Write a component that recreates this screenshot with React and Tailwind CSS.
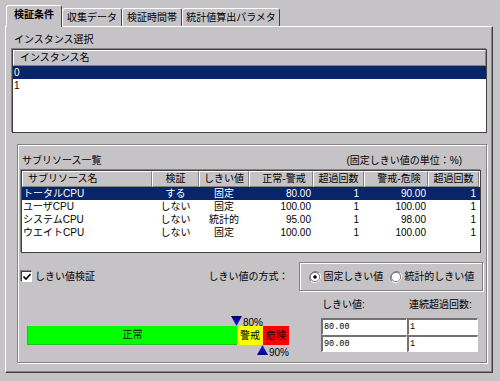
import React from 'react';

const columns = [
  { label: 'サブリソース名', w: 'w-[130px]', head: 'justify-start pl-[5px]', cell: 'justify-start pl-[1px]' },
  { label: '検証', w: 'w-[47px]', head: 'justify-center', cell: 'justify-center' },
  { label: 'しきい値', w: 'w-[50px]', head: 'justify-center', cell: 'justify-center' },
  { label: '正常-警戒', w: 'w-[64px]', head: 'justify-center pl-[6px]', cell: 'justify-end pr-[2px]' },
  { label: '超過回数', w: 'w-[51px]', head: 'justify-center', cell: 'justify-end pr-[5px]' },
  { label: '警戒-危険', w: 'w-[64px]', head: 'justify-center pl-[6px]', cell: 'justify-end pr-[2px]' },
  { label: '超過回数', w: 'w-[51px]', head: 'justify-center', cell: 'justify-end pr-[3px]' },
];

const rows = [
  ['トータルCPU', 'する', '固定', '80.00', '1', '90.00', '1'],
  ['ユーザCPU', 'しない', '固定', '100.00', '1', '100.00', '1'],
  ['システムCPU', 'しない', '統計的', '95.00', '1', '98.00', '1'],
  ['ウエイトCPU', 'しない', '固定', '100.00', '1', '100.00', '1'],
];

const tabs = [
  { label: '収集データ', w: 'w-[60px]' },
  { label: '検証時間帯', w: 'w-[60px]' },
  { label: '統計値算出パラメタ', w: 'w-[98px]' },
];

const Triangle = ({ up }) => (
  <svg width="11" height="10" viewBox="0 0 11 10">
    <defs>
      <linearGradient id={up ? 'tu' : 'td'} x1="0" y1="0" x2="0" y2="1">
        <stop offset="0" stopColor={up ? '#2020ff' : '#000070'} />
        <stop offset="1" stopColor={up ? '#000080' : '#1818ff'} />
      </linearGradient>
    </defs>
    <path d={up ? 'M5.5 0 L11 10 L0 10 Z' : 'M0 0 L11 0 L5.5 10 Z'} fill={`url(#${up ? 'tu' : 'td'})`} />
  </svg>
);

const Radio = ({ on }) => (
  <svg width="12" height="12" viewBox="0 0 12 12">
    <path d="M10.2 1.8 A6 6 0 0 0 1.8 10.2" fill="none" stroke="#848284" strokeWidth="1" />
    <path d="M1.8 10.2 A6 6 0 0 0 10.2 1.8" fill="none" stroke="#ffffff" strokeWidth="1" />
    <circle cx="6" cy="6" r="4.6" fill="#ffffff" stroke="#424142" strokeWidth="0.6" />
    {on && <circle cx="6" cy="6" r="1.8" fill="#000000" />}
  </svg>
);

const Input = ({ value, w }) => (
  <div className={`${w} h-[17px] bg-white border-t-2 border-l-2 border-t-[#737173] border-l-[#737173] border-r border-b border-r-white border-b-white flex items-center pl-[1px] font-['Liberation_Mono',monospace] text-[8.5px] leading-[13px]`}>
    {value}
  </div>
);

export default function App() {
  return (
    <div className="w-[500px] h-[381px] bg-[#c6c3c6] overflow-hidden text-black text-[10px] font-['Liberation_Sans','Noto_Sans_CJK_JP',sans-serif]">
      {/* tabs */}
      <div className="flex items-end h-[26px] pl-[6px]">
        <div className="relative z-10 w-[56px] h-[22px] -mb-px bg-[#c6c3c6] border-t border-l border-r border-t-white border-l-white border-r-[#424142] rounded-t-[3px] flex items-center justify-center pb-[3px] font-bold leading-[12px]">
          検証条件
        </div>
        {tabs.map((t) => (
          <div key={t.label} className={`${t.w} h-[18px] border-t border-l border-r border-t-white border-l-white border-r-[#424142] rounded-t-[3px] flex items-center justify-center leading-[12px]`}>
            {t.label}
          </div>
        ))}
      </div>

      {/* panel */}
      <div className="ml-[5px] w-[488px] h-[347px] border border-t-white border-l-white border-r-[#424142] border-b-[#424142] shadow-[inset_-1px_-1px_0_#848284]">
        <div className="ml-[8px] mt-[6px] h-[14px] leading-[14px]">インスタンス選択</div>

        {/* instance list */}
        <div className="ml-[6px] mt-[2px] w-[475px] h-[84px] bg-white border border-[#424142] shadow-[-1px_-1px_0_#848284]">
          <div className="h-[16px] bg-[#c6c3c6] border-t border-l border-b border-r border-t-white border-l-white border-b-[#848284] border-r-[#848284] flex items-center pl-[6px] leading-[12px]">
            インスタンス名
          </div>
          <div className="h-[13px] bg-[#08246b] text-white flex items-center pl-[1px] leading-[12px]">0</div>
          <div className="h-[13px] flex items-center pl-[1px] leading-[12px]">1</div>
        </div>

        {/* sub resource group */}
        <div className="ml-[11px] mt-[11px] w-[470px] h-[219px] border border-[#848284] shadow-[inset_1px_1px_0_#fff,1px_1px_0_#fff] px-[3px] flex flex-col">
          <div className="mt-[9px] h-[14px] flex items-center justify-between leading-[14px]">
            <span className="ml-[1px]">サブリソース一覧</span>
            <span className="mr-[21px]">(固定しきい値の単位：%)</span>
          </div>

          {/* table */}
          <div className="mt-[2px] w-[460px] h-[83px] bg-white border border-[#424142] shadow-[-1px_-1px_0_#848284]">
            <div className="flex h-[16px]">
              {columns.map((c, i) => (
                <div key={i} className={`${c.w} ${c.head} h-[16px] bg-[#c6c3c6] border-t border-l border-r border-b border-t-white border-l-white border-r-[#848284] border-b-[#848284] flex items-center leading-[12px]`}>
                  {c.label}
                </div>
              ))}
            </div>
            {rows.map((r, ri) => (
              <div key={ri} className={`flex h-[13px] ${ri === 0 ? 'bg-[#08246b] text-white' : ''}`}>
                {r.map((v, ci) => (
                  <div key={ci} className={`${columns[ci].w} ${columns[ci].cell} flex items-center leading-[12px]`}>
                    {v}
                  </div>
                ))}
              </div>
            ))}
          </div>

          {/* method row */}
          <div className="mt-[9px] h-[29px] flex items-center">
            <div className="w-[188px] flex items-center">
              <div className="w-[11px] h-[11px] bg-white border-t border-l border-t-[#424142] border-l-[#424142] border-b border-r border-b-white border-r-white shadow-[-1px_-1px_0_#848284] flex items-center justify-center">
                <svg width="8" height="8" viewBox="0 0 8 8">
                  <path d="M0.5 3.5 L3 6 L7.5 1" fill="none" stroke="#000" strokeWidth="1.6" />
                </svg>
              </div>
              <span className="ml-[3px] leading-[12px]">しきい値検証</span>
            </div>
            <div className="w-[91px] leading-[12px]">しきい値の方式：</div>
            <div className="w-[184px] h-[29px] border border-[#848284] shadow-[inset_1px_1px_0_#fff,1px_1px_0_#fff] flex items-center pl-[9px]">
              <Radio on />
              <span className="ml-[2px] leading-[12px]">固定しきい値</span>
              <span className="ml-[7px]"><Radio /></span>
              <span className="ml-[2px] leading-[12px]">統計的しきい値</span>
            </div>
          </div>

          {/* bar + thresholds */}
          <div className="flex">
            <div className="w-[300px] pl-[6px] pt-[25px]">
              <div className="h-[10px] flex items-end pl-[204px]">
                <Triangle />
                <span className="ml-[1px] leading-[10px] translate-y-[2px]">80%</span>
              </div>
              <div className="h-[19px] flex w-[262px] leading-[12px]">
                <div className="w-[210px] bg-[#00ff00] border-l border-b border-l-[#18c618] border-b-[#18c618] flex items-center justify-center">正常</div>
                <div className="w-[26px] bg-[#ffff00] flex items-center justify-center">警戒</div>
                <div className="w-[26px] bg-[#ff0000] flex items-center justify-center">危険</div>
              </div>
              <div className="h-[10px] flex items-start pl-[230px]">
                <Triangle up />
                <span className="ml-[1px] leading-[10px] translate-y-[3px]">90%</span>
              </div>
            </div>
            <div className="pt-[7px]">
              <div className="flex h-[14px] leading-[14px]">
                <span className="w-[86px] pl-[1px]">しきい値:</span>
                <span className="pl-[2px]">連続超過回数:</span>
              </div>
              <div className="mt-[6px] flex flex-col">
                <div className="flex">
                  <Input value="80.00" w="w-[86px]" />
                  <Input value="1" w="w-[71px]" />
                </div>
                <div className="flex">
                  <Input value="90.00" w="w-[86px]" />
                  <Input value="1" w="w-[71px]" />
                </div>
              </div>
            </div>
          </div>
        </div>
      </div>
    </div>
  );
}
